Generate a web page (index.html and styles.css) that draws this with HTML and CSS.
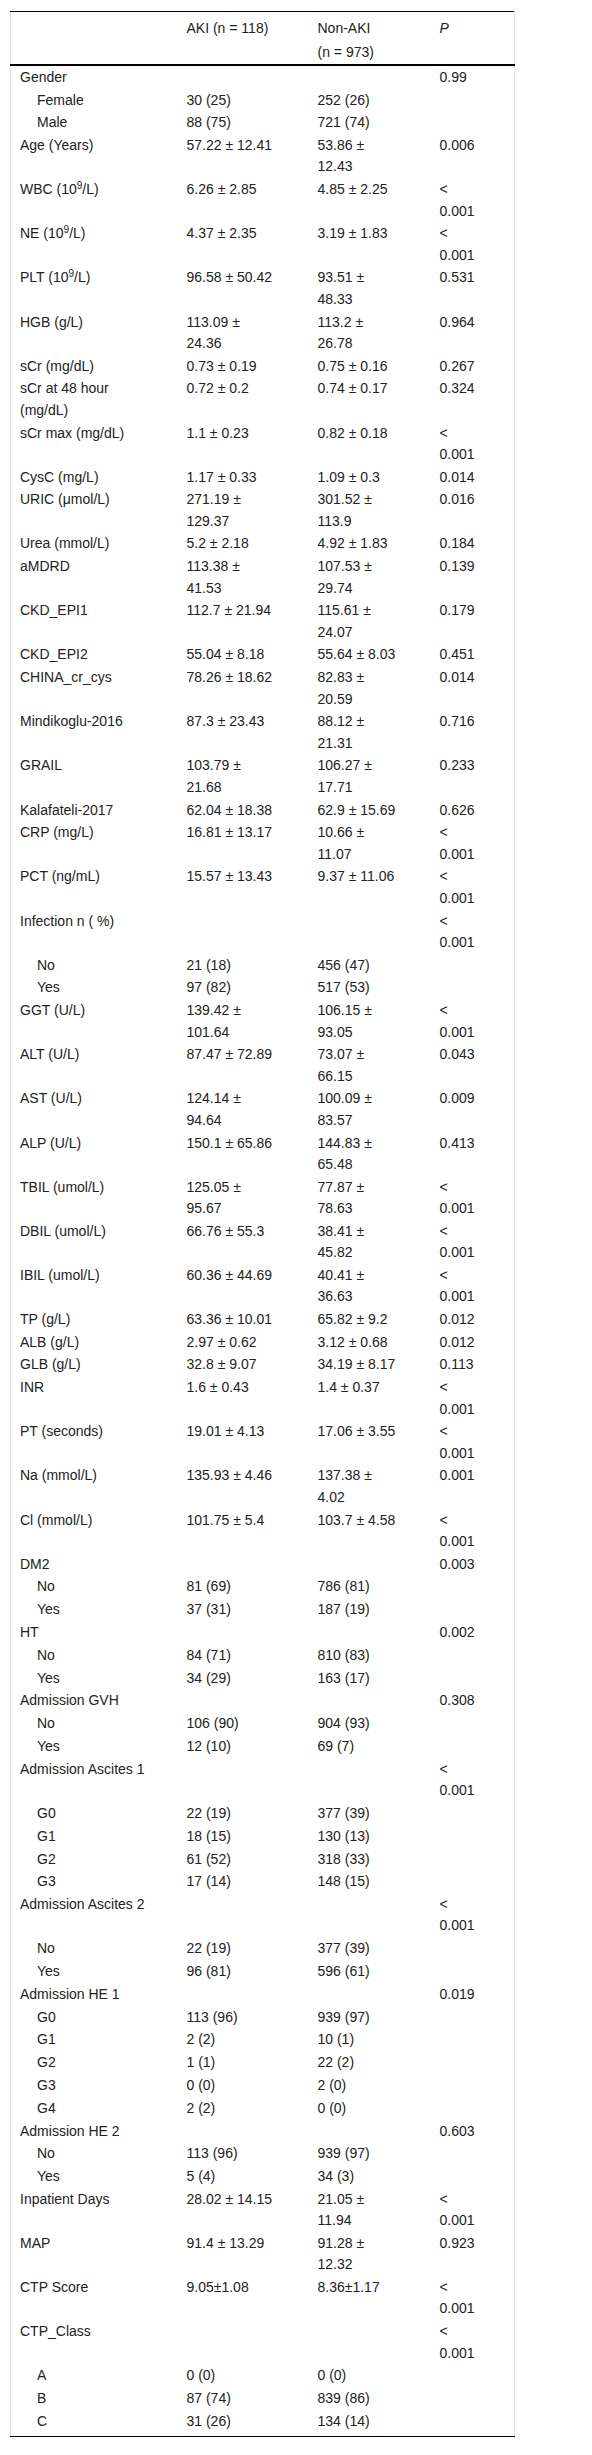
FILE: index.html
```html
<!DOCTYPE html>
<html lang="en">
<head>
<meta charset="utf-8">
<title>Table</title>
<link rel="stylesheet" href="styles.css">
</head>
<body>
<div class="wrap">
<table class="tbl">
<colgroup><col class="c1"><col class="c2"><col class="c3"><col class="c4"></colgroup>
<thead>
<tr><th></th><th>AKI (n&nbsp;=&nbsp;118)</th><th>Non-AKI (n&nbsp;=&nbsp;973)</th><th><i>P</i></th></tr>
</thead>
<tbody>
<tr><td>Gender</td><td></td><td></td><td>0.99</td></tr>
<tr><td class="sub">Female</td><td>30 (25)</td><td>252 (26)</td><td></td></tr>
<tr><td class="sub">Male</td><td>88 (75)</td><td>721 (74)</td><td></td></tr>
<tr><td>Age (Years)</td><td>57.22 ± 12.41</td><td>53.86 ± 12.43</td><td>0.006</td></tr>
<tr><td>WBC (10<sup>9</sup>/L)</td><td>6.26 ± 2.85</td><td>4.85 ± 2.25</td><td>&lt; 0.001</td></tr>
<tr><td>NE (10<sup>9</sup>/L)</td><td>4.37 ± 2.35</td><td>3.19 ± 1.83</td><td>&lt; 0.001</td></tr>
<tr><td>PLT (10<sup>9</sup>/L)</td><td>96.58 ± 50.42</td><td>93.51 ± 48.33</td><td>0.531</td></tr>
<tr><td>HGB (g/L)</td><td>113.09 ± 24.36</td><td>113.2 ± 26.78</td><td>0.964</td></tr>
<tr><td>sCr (mg/dL)</td><td>0.73 ± 0.19</td><td>0.75 ± 0.16</td><td>0.267</td></tr>
<tr><td>sCr at 48 hour (mg/dL)</td><td>0.72 ± 0.2</td><td>0.74 ± 0.17</td><td>0.324</td></tr>
<tr><td>sCr max (mg/dL)</td><td>1.1 ± 0.23</td><td>0.82 ± 0.18</td><td>&lt; 0.001</td></tr>
<tr><td>CysC (mg/L)</td><td>1.17 ± 0.33</td><td>1.09 ± 0.3</td><td>0.014</td></tr>
<tr><td>URIC (μmol/L)</td><td>271.19 ± 129.37</td><td>301.52 ± 113.9</td><td>0.016</td></tr>
<tr><td>Urea (mmol/L)</td><td>5.2 ± 2.18</td><td>4.92 ± 1.83</td><td>0.184</td></tr>
<tr><td>aMDRD</td><td>113.38 ± 41.53</td><td>107.53 ± 29.74</td><td>0.139</td></tr>
<tr><td>CKD_EPI1</td><td>112.7 ± 21.94</td><td>115.61 ± 24.07</td><td>0.179</td></tr>
<tr><td>CKD_EPI2</td><td>55.04 ± 8.18</td><td>55.64 ± 8.03</td><td>0.451</td></tr>
<tr><td>CHINA_cr_cys</td><td>78.26 ± 18.62</td><td>82.83 ± 20.59</td><td>0.014</td></tr>
<tr><td>Mindikoglu-2016</td><td>87.3 ± 23.43</td><td>88.12 ± 21.31</td><td>0.716</td></tr>
<tr><td>GRAIL</td><td>103.79 ± 21.68</td><td>106.27 ± 17.71</td><td>0.233</td></tr>
<tr><td>Kalafateli-2017</td><td>62.04 ± 18.38</td><td>62.9 ± 15.69</td><td>0.626</td></tr>
<tr><td>CRP (mg/L)</td><td>16.81 ± 13.17</td><td>10.66 ± 11.07</td><td>&lt; 0.001</td></tr>
<tr><td>PCT (ng/mL)</td><td>15.57 ± 13.43</td><td>9.37 ± 11.06</td><td>&lt; 0.001</td></tr>
<tr><td>Infection n ( %)</td><td></td><td></td><td>&lt; 0.001</td></tr>
<tr><td class="sub">No</td><td>21 (18)</td><td>456 (47)</td><td></td></tr>
<tr><td class="sub">Yes</td><td>97 (82)</td><td>517 (53)</td><td></td></tr>
<tr><td>GGT (U/L)</td><td>139.42 ± 101.64</td><td>106.15 ± 93.05</td><td>&lt; 0.001</td></tr>
<tr><td>ALT (U/L)</td><td>87.47 ± 72.89</td><td>73.07 ± 66.15</td><td>0.043</td></tr>
<tr><td>AST (U/L)</td><td>124.14 ± 94.64</td><td>100.09 ± 83.57</td><td>0.009</td></tr>
<tr><td>ALP (U/L)</td><td>150.1 ± 65.86</td><td>144.83 ± 65.48</td><td>0.413</td></tr>
<tr><td>TBIL (umol/L)</td><td>125.05 ± 95.67</td><td>77.87 ± 78.63</td><td>&lt; 0.001</td></tr>
<tr><td>DBIL (umol/L)</td><td>66.76 ± 55.3</td><td>38.41 ± 45.82</td><td>&lt; 0.001</td></tr>
<tr><td>IBIL (umol/L)</td><td>60.36 ± 44.69</td><td>40.41 ± 36.63</td><td>&lt; 0.001</td></tr>
<tr><td>TP (g/L)</td><td>63.36 ± 10.01</td><td>65.82 ± 9.2</td><td>0.012</td></tr>
<tr><td>ALB (g/L)</td><td>2.97 ± 0.62</td><td>3.12 ± 0.68</td><td>0.012</td></tr>
<tr><td>GLB (g/L)</td><td>32.8 ± 9.07</td><td>34.19 ± 8.17</td><td>0.113</td></tr>
<tr><td>INR</td><td>1.6 ± 0.43</td><td>1.4 ± 0.37</td><td>&lt; 0.001</td></tr>
<tr><td>PT (seconds)</td><td>19.01 ± 4.13</td><td>17.06 ± 3.55</td><td>&lt; 0.001</td></tr>
<tr><td>Na (mmol/L)</td><td>135.93 ± 4.46</td><td>137.38 ± 4.02</td><td>0.001</td></tr>
<tr><td>Cl (mmol/L)</td><td>101.75 ± 5.4</td><td>103.7 ± 4.58</td><td>&lt; 0.001</td></tr>
<tr><td>DM2</td><td></td><td></td><td>0.003</td></tr>
<tr><td class="sub">No</td><td>81 (69)</td><td>786 (81)</td><td></td></tr>
<tr><td class="sub">Yes</td><td>37 (31)</td><td>187 (19)</td><td></td></tr>
<tr><td>HT</td><td></td><td></td><td>0.002</td></tr>
<tr><td class="sub">No</td><td>84 (71)</td><td>810 (83)</td><td></td></tr>
<tr><td class="sub">Yes</td><td>34 (29)</td><td>163 (17)</td><td></td></tr>
<tr><td>Admission GVH</td><td></td><td></td><td>0.308</td></tr>
<tr><td class="sub">No</td><td>106 (90)</td><td>904 (93)</td><td></td></tr>
<tr><td class="sub">Yes</td><td>12 (10)</td><td>69 (7)</td><td></td></tr>
<tr><td>Admission Ascites 1</td><td></td><td></td><td>&lt; 0.001</td></tr>
<tr><td class="sub">G0</td><td>22 (19)</td><td>377 (39)</td><td></td></tr>
<tr><td class="sub">G1</td><td>18 (15)</td><td>130 (13)</td><td></td></tr>
<tr><td class="sub">G2</td><td>61 (52)</td><td>318 (33)</td><td></td></tr>
<tr><td class="sub">G3</td><td>17 (14)</td><td>148 (15)</td><td></td></tr>
<tr><td>Admission Ascites 2</td><td></td><td></td><td>&lt; 0.001</td></tr>
<tr><td class="sub">No</td><td>22 (19)</td><td>377 (39)</td><td></td></tr>
<tr><td class="sub">Yes</td><td>96 (81)</td><td>596 (61)</td><td></td></tr>
<tr><td>Admission HE 1</td><td></td><td></td><td>0.019</td></tr>
<tr><td class="sub">G0</td><td>113 (96)</td><td>939 (97)</td><td></td></tr>
<tr><td class="sub">G1</td><td>2 (2)</td><td>10 (1)</td><td></td></tr>
<tr><td class="sub">G2</td><td>1 (1)</td><td>22 (2)</td><td></td></tr>
<tr><td class="sub">G3</td><td>0 (0)</td><td>2 (0)</td><td></td></tr>
<tr><td class="sub">G4</td><td>2 (2)</td><td>0 (0)</td><td></td></tr>
<tr><td>Admission HE 2</td><td></td><td></td><td>0.603</td></tr>
<tr><td class="sub">No</td><td>113 (96)</td><td>939 (97)</td><td></td></tr>
<tr><td class="sub">Yes</td><td>5 (4)</td><td>34 (3)</td><td></td></tr>
<tr><td>Inpatient Days</td><td>28.02 ± 14.15</td><td>21.05 ± 11.94</td><td>&lt; 0.001</td></tr>
<tr><td>MAP</td><td>91.4 ± 13.29</td><td>91.28 ± 12.32</td><td>0.923</td></tr>
<tr><td>CTP Score</td><td>9.05±1.08</td><td>8.36±1.17</td><td>&lt; 0.001</td></tr>
<tr><td>CTP_Class</td><td></td><td></td><td>&lt; 0.001</td></tr>
<tr><td class="sub">A</td><td>0 (0)</td><td>0 (0)</td><td></td></tr>
<tr><td class="sub">B</td><td>87 (74)</td><td>839 (86)</td><td></td></tr>
<tr class="last"><td class="sub">C</td><td>31 (26)</td><td>134 (14)</td><td></td></tr>
</tbody>
</table>
</div>
</body>
</html>
```
FILE: styles.css
```css
html, body {
  margin: 0;
  padding: 0;
  background: #ffffff;
}
body {
  font-family: "Liberation Sans", Arial, sans-serif;
  font-size: 14px;
  color: #222222;
}
.wrap {
  padding: 11px 0 0 10px;
}
.tbl {
  border-collapse: collapse;
  table-layout: fixed;
  width: 504px;
  border-top: 1px solid #000000;
  border-bottom: 1px solid #000000;
  border-left: 1px solid #e2e2e2;
  border-right: 1px solid #e2e2e2;
}
.c1 { width: 167px; }
.c2 { width: 131px; }
.c3 { width: 122px; }
.c4 { width: 84px; }
.tbl th {
  font-weight: normal;
  text-align: left;
  vertical-align: top;
  padding: 4px 30px 0 9px;
  line-height: 24px;
  border-bottom: 2px solid #000000;
}
.tbl td {
  text-align: left;
  vertical-align: top;
  padding: 0.75px 30px 0.75px 9px;
  line-height: 21.3px;
}
.tbl td.sub {
  padding-left: 26px;
}
.tbl tr.last td {
  padding-bottom: 4px;
}
.tbl sup {
  font-size: 10px;
  line-height: 0;
  vertical-align: 5px;
}
```
